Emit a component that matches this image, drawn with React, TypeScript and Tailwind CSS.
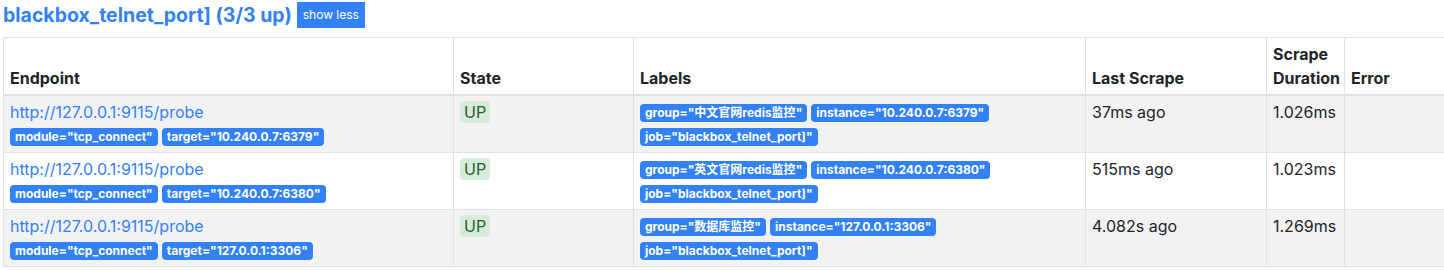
import React from 'react';

interface Target {
  endpoint: string;
  discovered: [string, string][];
  labels: [string, string][];
  lastScrape: string;
  duration: string;
}

const targets: Target[] = [
  {
    endpoint: 'http://127.0.0.1:9115/probe',
    discovered: [
      ['module', 'tcp_connect'],
      ['target', '10.240.0.7:6379'],
    ],
    labels: [
      ['group', '中文官网redis监控'],
      ['instance', '10.240.0.7:6379'],
      ['job', 'blackbox_telnet_port]'],
    ],
    lastScrape: '37ms ago',
    duration: '1.026ms',
  },
  {
    endpoint: 'http://127.0.0.1:9115/probe',
    discovered: [
      ['module', 'tcp_connect'],
      ['target', '10.240.0.7:6380'],
    ],
    labels: [
      ['group', '英文官网redis监控'],
      ['instance', '10.240.0.7:6380'],
      ['job', 'blackbox_telnet_port]'],
    ],
    lastScrape: '515ms ago',
    duration: '1.023ms',
  },
  {
    endpoint: 'http://127.0.0.1:9115/probe',
    discovered: [
      ['module', 'tcp_connect'],
      ['target', '127.0.0.1:3306'],
    ],
    labels: [
      ['group', '数据库监控'],
      ['instance', '127.0.0.1:3306'],
      ['job', 'blackbox_telnet_port]'],
    ],
    lastScrape: '4.082s ago',
    duration: '1.269ms',
  },
];

function Badge({ name, value }: { name: string; value: string }) {
  return (
    <span className="inline-block mr-[4px] h-[18px] rounded-[4px] bg-[#3381f6] px-[5px] text-[12px] font-bold leading-[18px] text-white align-top mt-[4px] whitespace-nowrap">
      {name}="{value}"
    </span>
  );
}

const th = 'border border-[#dee2e6] border-b-2 px-[6px] py-[4px] text-left align-bottom font-bold';
const td = 'border border-[#dee2e6] px-[6px] py-[4px] align-top';

export default function App() {
  return (
    <div
      className="bg-white pl-[3px] text-[16px] leading-[24px] text-[#212529]"
      style={{ fontFamily: 'Inter, "Noto Sans CJK SC", sans-serif' }}
    >
      <div className="flex h-[30px] items-center">
        <h2 className="text-[19.5px] font-bold leading-[30px] text-[#3381f6]">
          blackbox_telnet_port] (3/3 up)
        </h2>
        <button className="ml-[5px] h-[26px] bg-[#3381f6] px-[6px] text-[12px] text-white">
          show less
        </button>
      </div>
      <table className="mt-[7px] w-[1441px] table-fixed border-collapse">
        <colgroup>
          <col className="w-[450px]" />
          <col className="w-[180px]" />
          <col className="w-[452px]" />
          <col className="w-[181px]" />
          <col className="w-[78px]" />
          <col className="w-[100px]" />
        </colgroup>
        <thead>
          <tr>
            <th className={th}>Endpoint</th>
            <th className={th}>State</th>
            <th className={th}>Labels</th>
            <th className={th}>Last Scrape</th>
            <th className={th}>Scrape Duration</th>
            <th className={th}>Error</th>
          </tr>
        </thead>
        <tbody>
          {targets.map((t, i) => (
            <tr key={i} className={i % 2 === 0 ? 'bg-[#f2f2f2]' : 'bg-white'}>
              <td className={td}>
                <a href="#" className="block h-[24px] text-[#3381f6]">
                  {t.endpoint}
                </a>
                <div className="h-[24px]">
                  {t.discovered.map(([k, v]) => (
                    <Badge key={k} name={k} value={v} />
                  ))}
                </div>
              </td>
              <td className={td}>
                <span className="rounded-[4px] bg-[#d6ecd9] px-[4px] py-[1px] text-[#2b5d34]">UP</span>
              </td>
              <td className={td}>
                <div className="h-[48px]">
                  {t.labels.map(([k, v]) => (
                    <Badge key={k} name={k} value={v} />
                  ))}
                </div>
              </td>
              <td className={td}>{t.lastScrape}</td>
              <td className={td}>{t.duration}</td>
              <td className={td}></td>
            </tr>
          ))}
        </tbody>
      </table>
    </div>
  );
}
